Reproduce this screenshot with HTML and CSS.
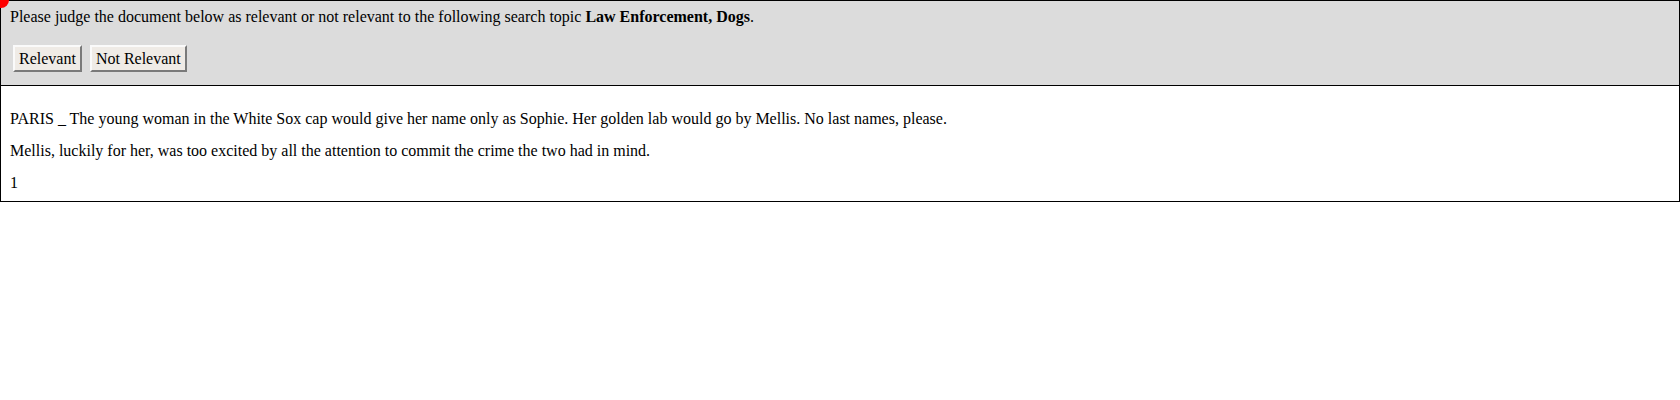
FILE: index.html
```html
<!DOCTYPE html>
<html>
<head>
<meta charset="utf-8">
<link rel="stylesheet" href="styles.css">
</head>
<body>
<div class="dot"></div>
<div class="frame">
  <div class="header">
    <p class="prompt">Please judge the document below as relevant or not relevant to the following search topic <b>Law Enforcement, Dogs</b>.</p>
    <div class="buttons">
      <button class="btn">Relevant</button>
      <button class="btn">Not Relevant</button>
    </div>
  </div>
  <div class="doc">
    <p>PARIS _ The young woman in the White Sox cap would give her name only as Sophie. Her golden lab would go by Mellis. No last names, please.</p>
    <p>Mellis, luckily for her, was too excited by all the attention to commit the crime the two had in mind.</p>
    <p>1</p>
  </div>
</div>
</body>
</html>
```

FILE: styles.css
```css
html, body {
  margin: 0;
  padding: 0;
  background: #fff;
}
body {
  font-family: "Liberation Serif", "Times New Roman", serif;
  font-size: 16px;
  line-height: 18px;
  color: #000;
}
.dot {
  position: absolute;
  left: -7px;
  top: -8px;
  width: 16px;
  height: 16px;
  border-radius: 50%;
  background: #ff0000;
}
.frame {
  border: 1px solid #000;
}
.header {
  background: #dcdcdc;
  border-bottom: 1px solid #000;
  padding: 7px 9px 13px;
}
.prompt {
  margin: 0;
}
.buttons {
  display: flex;
  gap: 8px;
  margin-top: 19px;
  padding-left: 3px;
}
.btn {
  font-family: "Liberation Serif", "Times New Roman", serif;
  font-size: 16px;
  line-height: 18px;
  color: #000;
  background: #efebe6;
  height: 27px;
  padding: 0 4px;
  border: 2px solid;
  border-color: #fafafa #7a7a7a #7a7a7a #fafafa;
  margin: 0;
}
.doc {
  padding: 24px 9px 9px;
}
.doc p {
  margin: 0 0 14px;
}
.doc p:last-child {
  margin-bottom: 0;
}
```
